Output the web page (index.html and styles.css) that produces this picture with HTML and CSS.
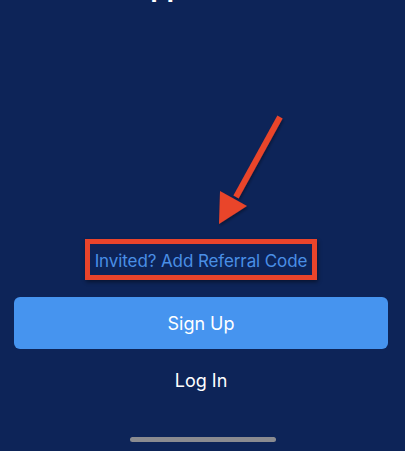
FILE: index.html
```html
<!DOCTYPE html>
<html lang="en">
<head>
<meta charset="utf-8">
<title>Welcome</title>
<link rel="stylesheet" href="styles.css">
</head>
<body>
<div class="screen">
  <div class="title">App</div>
  <svg class="arrow" width="405" height="451" viewBox="0 0 405 451" aria-hidden="true">
    <g filter="url(#sh)">
      <line x1="280" y1="117" x2="236" y2="197" stroke="#e9442b" stroke-width="6" stroke-linecap="butt"/>
      <polygon points="220,191 247,206 219,224" fill="#e9442b"/>
    </g>
    <defs>
      <filter id="sh" x="-20%" y="-20%" width="140%" height="140%">
        <feDropShadow dx="1" dy="2" stdDeviation="1.5" flood-color="#000" flood-opacity="0.35"/>
      </filter>
    </defs>
  </svg>
  <div class="actions">
    <a class="referral" href="#">Invited? Add Referral Code</a>
    <button class="signup" type="button">Sign Up</button>
    <button class="login" type="button">Log In</button>
  </div>
  <div class="home-indicator"></div>
</div>
</body>
</html>
```
FILE: styles.css
```css
html, body {
  margin: 0;
  padding: 0;
  background: #0d2458;
}
.screen {
  position: relative;
  width: 405px;
  height: 451px;
  overflow: hidden;
  display: flex;
  flex-direction: column;
  font-family: Inter, "Noto Sans", sans-serif;
  color: #fff;
}
.title {
  height: 32px;
  margin-top: -28px;
  padding-left: 131px;
  font-size: 26px;
  line-height: 32px;
  font-weight: 700;
  color: #fff;
  white-space: nowrap;
}
.arrow {
  position: absolute;
  left: 0;
  top: 0;
  pointer-events: none;
}
.actions {
  margin-top: 235px;
  display: flex;
  flex-direction: column;
  align-items: center;
  padding: 0 17px 0 14px;
}
.referral {
  box-sizing: border-box;
  width: 232px;
  height: 41px;
  border: 5px solid #e9442b;
  box-shadow: 1px 2px 4px rgba(0, 0, 0, 0.45);
  display: flex;
  align-items: center;
  justify-content: center;
  padding-top: 2px;
  color: #4a8fe6;
  text-decoration: none;
  font-size: 17px;
  letter-spacing: -0.1px;
  white-space: nowrap;
}
.signup {
  margin-top: 17px;
  width: 100%;
  height: 52px;
  border: none;
  border-radius: 6px;
  background: #4694ef;
  color: #fff;
  font-family: inherit;
  font-size: 18px;
  padding: 0;
}
.login {
  margin-top: 14px;
  height: 34px;
  border: none;
  background: transparent;
  color: #fff;
  font-family: inherit;
  font-size: 18px;
  padding: 0;
}
.home-indicator {
  margin: auto auto 9px;
  width: 146px;
  height: 5px;
  border-radius: 3px;
  background: #8a8b90;
}
```
